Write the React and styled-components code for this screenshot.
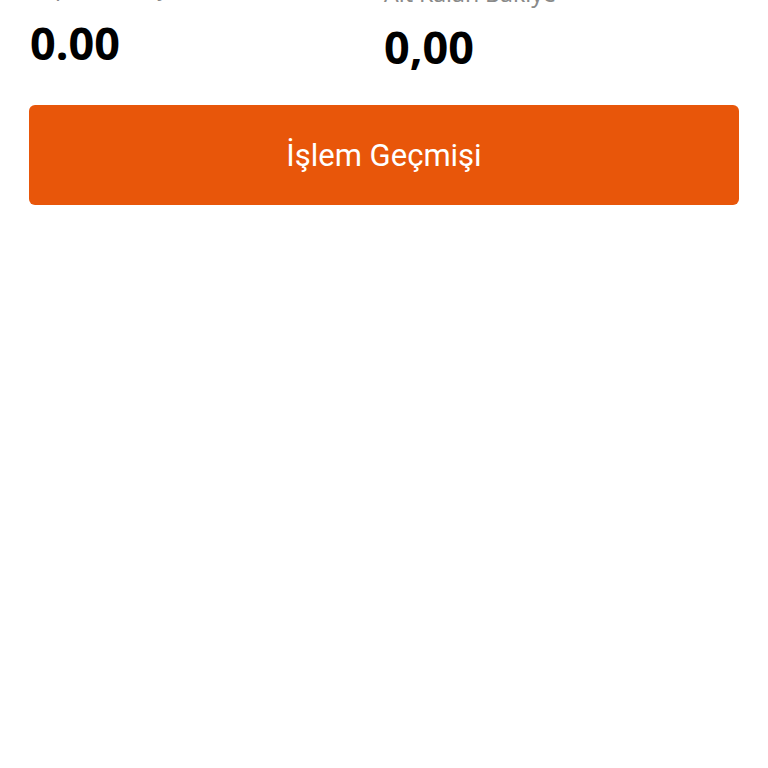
import React from 'react';
import styled, { createGlobalStyle } from 'styled-components';

const GlobalStyle = createGlobalStyle`
  html, body {
    margin: 0;
    padding: 0;
    background: #ffffff;
    overflow: hidden;
  }
`;

const Page = styled.div`
  width: 768px;
  height: 768px;
  background: #ffffff;
  overflow: hidden;
`;

const Content = styled.div`
  margin-top: -25px;
  padding: 0 29px 0 29px;
  display: flex;
  flex-direction: column;
  gap: 27px;
`;

const Summary = styled.div`
  display: grid;
  grid-template-columns: 1fr 1fr;
`;

const Stat = styled.div`
  display: flex;
  flex-direction: column;
  padding-top: ${({ offset }) => offset || 0}px;
  padding-left: ${({ indent }) => indent || 0}px;
`;

const Label = styled.span`
  font-family: 'Noto Sans', 'Open Sans', sans-serif;
  font-size: 23px;
  line-height: 28px;
  color: #8a8a8a;
  white-space: nowrap;
  margin-top: ${({ lift }) => -(lift || 0)}px;
  margin-bottom: ${({ lift }) => lift || 0}px;
`;

const Amount = styled.span`
  font-family: 'Noto Sans', 'Open Sans', sans-serif;
  font-weight: 700;
  font-size: 45px;
  line-height: 62px;
  margin-top: 9px;
  color: #000000;
`;

const HistoryButton = styled.button`
  height: 100px;
  border: none;
  border-radius: 6px;
  background: #e8560a;
  color: #ffffff;
  font-family: Roboto, 'Noto Sans', sans-serif;
  font-size: 31px;
  font-weight: 400;
  cursor: pointer;
  display: flex;
  align-items: center;
  justify-content: center;
`;

export default function App() {
  return (
    <Page>
      <GlobalStyle />
      <Content>
        <Summary>
          <Stat indent={1}>
            <Label lift={3}>Toplam Borç</Label>
            <Amount>0.00</Amount>
          </Stat>
          <Stat offset={4}>
            <Label>Ait Kalan Bakiye</Label>
            <Amount>0,00</Amount>
          </Stat>
        </Summary>
        <HistoryButton>İşlem Geçmişi</HistoryButton>
      </Content>
    </Page>
  );
}
